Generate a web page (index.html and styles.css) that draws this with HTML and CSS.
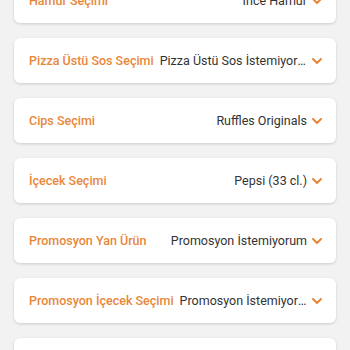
FILE: index.html
```html
<!DOCTYPE html>
<html lang="tr">
<head>
<meta charset="utf-8">
<link rel="stylesheet" href="styles.css">
</head>
<body>
<div class="list">
  <div class="card"><span class="label">Hamur Seçimi</span><span class="value">İnce Hamur</span><svg class="chev" viewBox="0 0 10 6"><path d="M1 1l4 4 4-4"/></svg></div>
  <div class="card"><span class="label">Pizza Üstü Sos Seçimi</span><span class="value">Pizza Üstü Sos İstemiyorum</span><svg class="chev" viewBox="0 0 10 6"><path d="M1 1l4 4 4-4"/></svg></div>
  <div class="card"><span class="label">Cips Seçimi</span><span class="value">Ruffles Originals</span><svg class="chev" viewBox="0 0 10 6"><path d="M1 1l4 4 4-4"/></svg></div>
  <div class="card"><span class="label">İçecek Seçimi</span><span class="value">Pepsi (33 cl.)</span><svg class="chev" viewBox="0 0 10 6"><path d="M1 1l4 4 4-4"/></svg></div>
  <div class="card"><span class="label">Promosyon Yan Ürün</span><span class="value">Promosyon İstemiyorum</span><svg class="chev" viewBox="0 0 10 6"><path d="M1 1l4 4 4-4"/></svg></div>
  <div class="card"><span class="label">Promosyon İçecek Seçimi</span><span class="value">Promosyon İstemiyorum</span><svg class="chev" viewBox="0 0 10 6"><path d="M1 1l4 4 4-4"/></svg></div>
  <div class="card"><span class="label"></span><span class="value"></span></div>
</div>
</body>
</html>
```
FILE: styles.css
```css
html, body {
  margin: 0;
  padding: 0;
  background: #f2f2f2;
  overflow: hidden;
  height: 350px;
}
.list {
  display: flex;
  flex-direction: column;
  gap: 15px;
  padding: 0 14px;
  margin-top: -22px;
}
.card {
  height: 45px;
  flex: none;
  background: #fff;
  border-radius: 6px;
  box-shadow: 0 1px 3px rgba(0,0,0,0.16);
  display: flex;
  align-items: center;
  padding: 0 14px 0 15px;
  font-family: Roboto, "Liberation Sans", sans-serif;
  font-size: 12.5px;
}
.label {
  color: #e8873a;
  font-weight: 500;
  white-space: nowrap;
  flex: none;
  margin-right: 6px;
}
.value {
  color: #333;
  flex: 1 1 auto;
  min-width: 0;
  text-align: right;
  white-space: nowrap;
  overflow: hidden;
  text-overflow: ellipsis;
}
.chev {
  width: 10px;
  height: 6px;
  flex: none;
  margin-left: 5px;
  margin-top: 1px;
  fill: none;
  stroke: #e8873a;
  stroke-width: 2;
  stroke-linecap: round;
  stroke-linejoin: round;
}
```
